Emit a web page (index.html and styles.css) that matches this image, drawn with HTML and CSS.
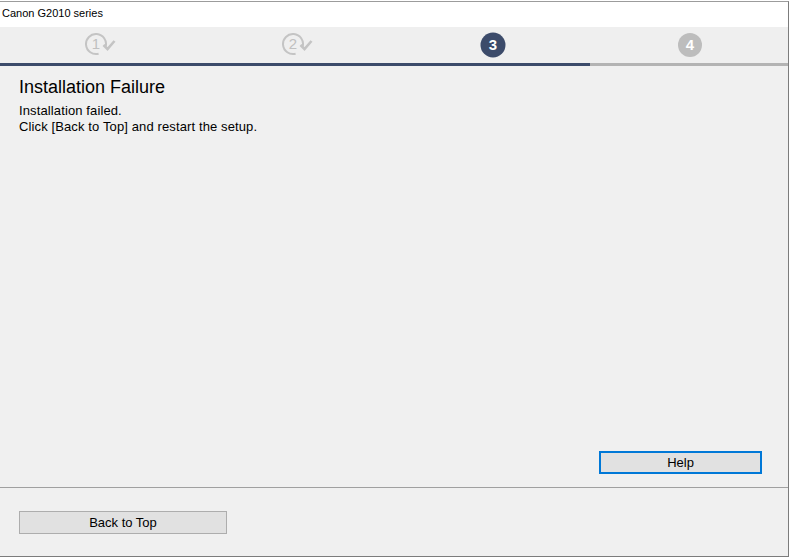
FILE: index.html
```html
<!DOCTYPE html>
<html>
<head>
<meta charset="utf-8">
<link rel="stylesheet" href="styles.css">
</head>
<body>
<div class="window">
  <div class="titlebar">Canon G2010 series</div>
  <div class="steps">
    <div class="step">
      <svg width="34" height="24" viewBox="-3 0 34 24">
        <path d="M20.66 13.6 A10 10 0 1 0 13.6 20.66" fill="none" stroke="#c4c4c4" stroke-width="2"/>
        <text x="11" y="16" text-anchor="middle" class="num-done">1</text>
        <path d="M18.5 12 L22.5 16 L29.5 8" fill="none" stroke="#c4c4c4" stroke-width="2.6"/>
      </svg>
    </div>
    <div class="step">
      <svg width="34" height="24" viewBox="-3 0 34 24">
        <path d="M20.66 13.6 A10 10 0 1 0 13.6 20.66" fill="none" stroke="#c4c4c4" stroke-width="2"/>
        <text x="11" y="16" text-anchor="middle" class="num-done">2</text>
        <path d="M18.5 12 L22.5 16 L29.5 8" fill="none" stroke="#c4c4c4" stroke-width="2.6"/>
      </svg>
    </div>
    <div class="step">
      <svg width="26" height="26" viewBox="0 0 26 26">
        <circle cx="13" cy="13" r="12.5" fill="#3c4b6a"/>
        <text x="13" y="18" text-anchor="middle" class="num-fill">3</text>
      </svg>
    </div>
    <div class="step">
      <svg width="26" height="26" viewBox="0 0 26 26">
        <circle cx="13" cy="13" r="12" fill="#bdbdbd"/>
        <text x="13" y="18" text-anchor="middle" class="num-fill">4</text>
      </svg>
    </div>
  </div>
  <div class="progress">
    <div class="progress-done"></div>
    <div class="progress-rest"></div>
  </div>
  <div class="main">
    <h1 class="heading">Installation Failure</h1>
    <p class="message">Installation failed.<br>Click [Back to Top] and restart the setup.</p>
    <div class="help-row">
      <button class="btn btn-help">Help</button>
    </div>
  </div>
  <div class="footer">
    <button class="btn btn-back">Back to Top</button>
  </div>
</div>
</body>
</html>
```
FILE: styles.css
```css
html, body {
  margin: 0;
  padding: 0;
  background: #ffffff;
}
body {
  width: 791px;
  height: 559px;
  overflow: hidden;
  font-family: "Liberation Sans", Arial, sans-serif;
  color: #000;
}
.window {
  width: 788px;
  height: 554px;
  margin-top: 1px;
  border-top: 1px solid #9c9c9c;
  border-right: 1px solid #7c7c7c;
  border-bottom: 1px solid #7c7c7c;
  display: flex;
  flex-direction: column;
  background: #f0f0f0;
}
.titlebar {
  height: 25px;
  line-height: 23px;
  background: #ffffff;
  font-size: 11px;
  padding-left: 2px;
  flex: none;
}
.steps {
  height: 36px;
  display: grid;
  grid-template-columns: repeat(4, 1fr);
  background: #efefef;
  flex: none;
}
.step {
  display: flex;
  align-items: center;
  justify-content: center;
}
.step svg {
  display: block;
}
.num-done {
  font-family: "Liberation Sans", Arial, sans-serif;
  font-size: 15px;
  fill: #c0c0c0;
}
.num-fill {
  font-family: "Liberation Sans", Arial, sans-serif;
  font-size: 15px;
  font-weight: bold;
  fill: #ffffff;
}
.progress {
  height: 3px;
  display: flex;
  flex: none;
}
.progress-done {
  width: 590px;
  background: #3c4b6a;
}
.progress-rest {
  flex: 1;
  background: #b3b3b3;
}
.main {
  flex: 1;
  display: flex;
  flex-direction: column;
  padding: 10px 26px 13px 19px;
  border-bottom: 1px solid #a0a0a0;
}
.heading {
  margin: 0;
  font-size: 18px;
  line-height: 22px;
  font-weight: normal;
}
.message {
  margin: 5px 0 0 0;
  font-size: 13px;
  line-height: 16px;
  letter-spacing: 0.12px;
}
.help-row {
  margin-top: auto;
  display: flex;
  justify-content: flex-end;
}
.btn {
  font-family: "Liberation Sans", Arial, sans-serif;
  font-size: 13px;
  color: #000;
  background: #e1e1e1;
  padding: 0;
  margin: 0;
  box-sizing: border-box;
}
.btn-help {
  width: 163px;
  height: 23px;
  border: 2px solid #0078d7;
}
.footer {
  height: 68px;
  flex: none;
  padding: 23px 0 0 19px;
  box-sizing: border-box;
}
.btn-back {
  width: 208px;
  height: 23px;
  border: 1px solid #adadad;
}
```
